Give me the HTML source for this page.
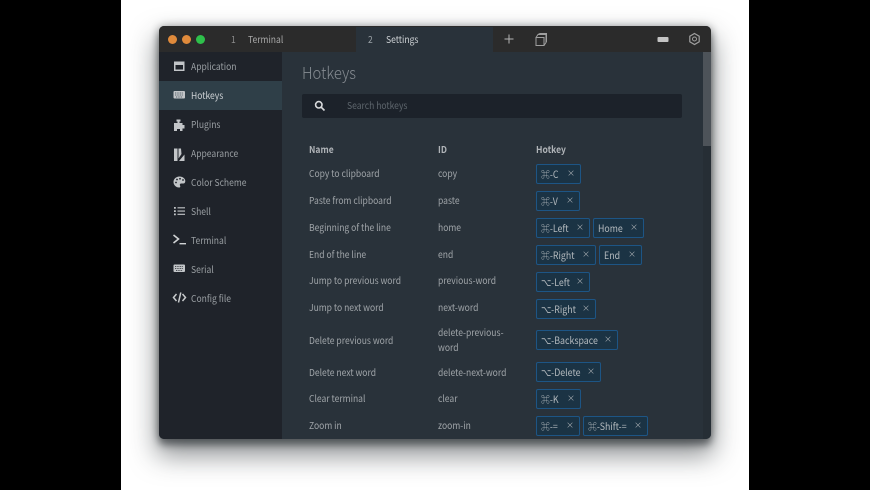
<!DOCTYPE html>
<html><head><meta charset="utf-8">
<style>
html,body{margin:0;padding:0;width:870px;height:490px;overflow:hidden;background:#000}
*{box-sizing:border-box}
body{font-family:"Noto Sans CJK SC","Liberation Sans",sans-serif;font-size:9.5px;color:#a3a8ac;position:relative}
#bg{position:absolute;left:121px;top:0;width:628px;height:490px;background:#fff;overflow:hidden}
#win{position:absolute;left:159px;top:26px;width:552px;height:413px;border-radius:5px;background:#29323a;box-shadow:0 6px 8px rgba(40,45,50,.55),0 14px 26px 3px rgba(40,45,50,.5),0 0 9px rgba(0,0,0,.3)}
.a{position:absolute;white-space:nowrap;line-height:14px;transform:scaleX(.9);transform-origin:left center}
.s{position:absolute;overflow:visible}
.chip{position:absolute;height:20px;background:#1b3344;border:1px solid #1d5585;border-radius:2px;color:#b4babe;line-height:18px;padding-left:4px;white-space:nowrap;font-size:9.800px}
.chip span{display:inline-block;transform:scaleX(.9);transform-origin:left center}
.chip i{position:absolute;right:5px;top:0;font-style:normal;font-size:8px;color:#a5abb0;line-height:18px}
.n{color:#a0a5a9}
.side{color:#9a9fa3;left:191px}
.h{font-weight:700;color:#b0b4b8}
</style></head><body>
<div id="bg"></div>
<div id="win"></div>
<div class="s" style="left:159px;top:26px;width:552px;height:26px;background:#2b2b2b;border-radius:5px 5px 0 0"></div>
<div class="s" style="left:356px;top:27px;width:137px;height:25px;background:#29323a"></div>
<div class="s" style="left:159px;top:52px;width:123px;height:387px;background:#1f232a;border-radius:0 0 0 5px"></div>
<div class="s" style="left:159px;top:81px;width:123px;height:29px;background:#2f3f48"></div>
<div class="s" style="left:703px;top:52px;width:8px;height:387px;background:#262e35;border-radius:0 0 5px 0"></div>
<div class="s" style="left:703px;top:52px;width:8px;height:94px;background:#4d5359"></div>

<div class="s" style="left:168px;top:35px;width:9px;height:9px;border-radius:50%;background:#e08a3b"></div>
<div class="s" style="left:182px;top:35px;width:9px;height:9px;border-radius:50%;background:#e08a3b"></div>
<div class="s" style="left:196px;top:35px;width:9px;height:9px;border-radius:50%;background:#2ec04b"></div>

<div class="a" style="left:231px;top:32px;color:#8b8b8b">1</div>
<div class="a" style="left:248px;top:32px;color:#a9a9a9">Terminal</div>
<div class="a" style="left:368px;top:32px;color:#99a0a5">2</div>
<div class="a" style="left:386px;top:32px;color:#cfd3d6">Settings</div>

<svg class="s" style="left:500px;top:26px" width="60" height="26" fill="none" stroke="#b5b5b5" stroke-width="1">
<path d="M4.500 13h9M9 8.500v9"/>
<path d="M36 11.500h8v8h-8zM36 11.500l2-3h8v8l-2 3M38 8.500l2-1h6.500v8l-.5 1" stroke="#9f9f9f"/>
</svg>
<svg class="s" style="left:650px;top:26px" width="60" height="26" fill="none">
<rect x="7.500" y="11" width="11" height="5" rx="1" fill="#c4c4c4"/>
<path d="M44.500 7.500l4.700 2.700v5.600l-4.700 2.700-4.700-2.700v-5.600z" stroke="#a0a0a0" stroke-width="1.200"/>
<circle cx="44.500" cy="13" r="2" stroke="#a0a0a0"/>
</svg>

<!-- Sidebar icons -->
<svg class="s" style="left:159px;top:52px" width="40" height="260" fill="#c2c5c8">
<path d="M15 9.500h10.500v9.500H15zM16.500 13v4.500h7.500V13z" fill-rule="evenodd"/>
<g><rect x="14.500" y="39" width="11.500" height="7.500" rx="1"/><path d="M16 41h8.500M16 43h8.500M17 45h6.500" stroke="#2f3f48" stroke-width=".8" stroke-dasharray="1 .7"/></g>
<path d="M15 71h3.500v-1.500h-1v-2h4v2h-1V71h3v2h2v3.500h-2v2.500h-2.500v-2h-3v2H15z"/>
<path d="M15 96.500h3.500V109H15zM19.500 96.500h2.500l.5 5.500-3 4.500zM20 109l5.500-6.500v6.500z"/>
<path d="M20.500 124.500c-3.500 0-6 2.500-6 5.500s2.500 5.500 5.500 5.500c1.500 0 1.500-1 1-2s0-2 1.500-2h1.800c1.200 0 2-1 2-2.500 0-2.500-2.700-4.500-5.800-4.500z"/>
<path d="M15 155h1.800v1.800H15zM15 158.200h1.800v1.800H15zM15 161.500h1.800v1.800H15zM18.500 155.300H26v1.100h-7.500zM18.500 158.500H26v1.100h-7.500zM18.500 161.800H26v1.100h-7.500z"/>
<path d="M14.500 183l5 4-5 4" fill="none" stroke="#d0d3d5" stroke-width="1.600"/><path d="M20.500 191h6.500v1.400h-6.500z" fill="#d0d3d5"/>
<g><rect x="14.500" y="212.500" width="11.500" height="7.500" rx="1"/><path d="M16 214.500h8.500M16 216.500h8.500M17 218.500h6.500" stroke="#1f232a" stroke-width=".8" stroke-dasharray="1 .7"/></g>
<path d="M17.500 242l-3 3.500 3 3.500M23.500 242l3 3.500-3 3.500M21.800 240.500l-2.300 10" fill="none" stroke="#c8cbcd" stroke-width="1.500"/>
<g fill="#1f232a"><circle cx="18" cy="127.500" r=".9"/><circle cx="21" cy="126.800" r=".9"/><circle cx="24" cy="128" r=".9"/><circle cx="17" cy="130.500" r=".9"/></g>
</svg>

<div class="a side" style="top:59px">Application</div>
<div class="a" style="left:191px;top:88px;color:#cdd1d4">Hotkeys</div>
<div class="a side" style="top:116.500px">Plugins</div>
<div class="a side" style="top:145.500px">Appearance</div>
<div class="a side" style="top:174.500px">Color Scheme</div>
<div class="a side" style="top:203.500px">Shell</div>
<div class="a side" style="top:232.500px">Terminal</div>
<div class="a side" style="top:261.500px">Serial</div>
<div class="a side" style="top:290.500px">Config file</div>

<div class="a" style="left:302px;top:62px;font-size:16.500px;font-weight:300;line-height:21px;color:#868c92">Hotkeys</div>

<div class="s" style="left:302px;top:94px;width:380px;height:24px;background:#1c222a;border-radius:2px"></div>
<svg class="s" style="left:314px;top:100px" width="12" height="12" fill="none" stroke="#d8dadc" stroke-width="1.600"><circle cx="4.800" cy="4.800" r="3.200"/><path d="M7.300 7.300l3.200 3.200"/></svg>
<div class="a" style="left:347px;top:98px;color:#5e666d">Search hotkeys</div>

<div class="a h" style="left:309px;top:142px">Name</div>
<div class="a h" style="left:437.500px;top:142px">ID</div>
<div class="a h" style="left:536px;top:142px">Hotkey</div>

<div class="a n" style="left:309px;top:166px">Copy to clipboard</div>
<div class="a n" style="left:437.500px;top:166px">copy</div>
<div class="a n" style="left:309px;top:193px">Paste from clipboard</div>
<div class="a n" style="left:437.500px;top:193px">paste</div>
<div class="a n" style="left:309px;top:220px">Beginning of the line</div>
<div class="a n" style="left:437.500px;top:220px">home</div>
<div class="a n" style="left:309px;top:247px">End of the line</div>
<div class="a n" style="left:437.500px;top:247px">end</div>
<div class="a n" style="left:309px;top:273px">Jump to previous word</div>
<div class="a n" style="left:437.500px;top:273px">previous-word</div>
<div class="a n" style="left:309px;top:300px">Jump to next word</div>
<div class="a n" style="left:437.500px;top:300px">next-word</div>
<div class="a n" style="left:309px;top:332.500px">Delete previous word</div>
<div class="a n" style="left:437.500px;top:325px">delete-previous-</div>
<div class="a n" style="left:437.500px;top:340px">word</div>
<div class="a n" style="left:309px;top:364.500px">Delete next word</div>
<div class="a n" style="left:437.500px;top:364.500px">delete-next-word</div>
<div class="a n" style="left:309px;top:391px">Clear terminal</div>
<div class="a n" style="left:437.500px;top:391px">clear</div>
<div class="a n" style="left:309px;top:418px">Zoom in</div>
<div class="a n" style="left:437.500px;top:418px">zoom-in</div>

<div class="chip" style="left:536px;top:164px;width:45px"><span>⌘-C</span><i>×</i></div>
<div class="chip" style="left:536px;top:191px;width:44px"><span>⌘-V</span><i>×</i></div>
<div class="chip" style="left:536px;top:218px;width:54px"><span>⌘-Left</span><i>×</i></div>
<div class="chip" style="left:593px;top:218px;width:51px"><span>Home</span><i>×</i></div>
<div class="chip" style="left:536px;top:245px;width:60px"><span>⌘-Right</span><i>×</i></div>
<div class="chip" style="left:599px;top:245px;width:43px"><span>End</span><i>×</i></div>
<div class="chip" style="left:536px;top:272px;width:54px"><span>⌥-Left</span><i>×</i></div>
<div class="chip" style="left:536px;top:299px;width:60px"><span>⌥-Right</span><i>×</i></div>
<div class="chip" style="left:536px;top:330px;width:82px"><span>⌥-Backspace</span><i>×</i></div>
<div class="chip" style="left:536px;top:362px;width:65px"><span>⌥-Delete</span><i>×</i></div>
<div class="chip" style="left:536px;top:389px;width:45px"><span>⌘-K</span><i>×</i></div>
<div class="chip" style="left:536px;top:416px;width:44px"><span>⌘-=</span><i>×</i></div>
<div class="chip" style="left:583px;top:416px;width:65px"><span>⌘-Shift-=</span><i>×</i></div>
</body></html>
